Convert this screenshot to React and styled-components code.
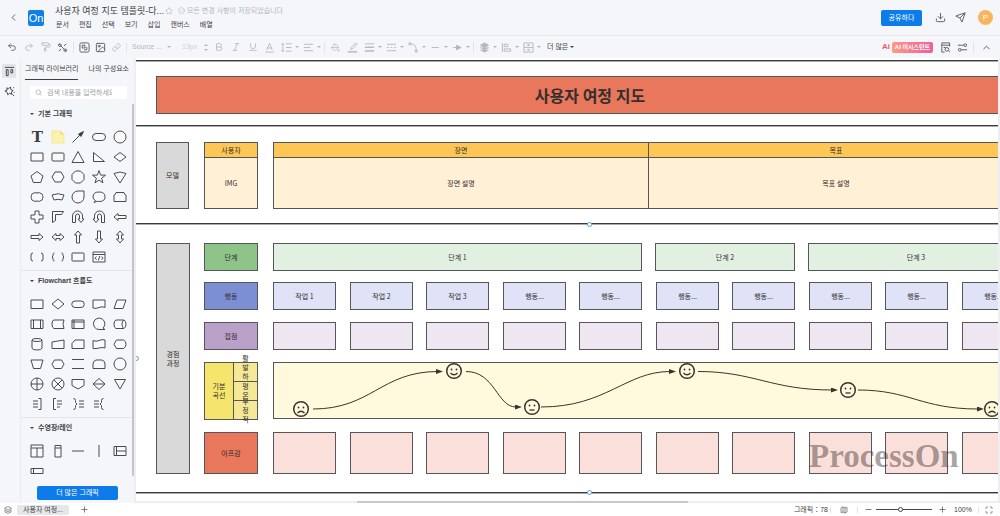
import { useState } from 'react'
import styled, { createGlobalStyle, css } from 'styled-components'
import {
  ChevronLeft, ChevronUp, Star, CircleCheck, Download, Send, Undo2, Redo2, PaintRoller,
  Image, Link, Bold, Italic, Underline, PaintBucket, Search, Layers, Map, Maximize, Minus, Plus,
} from 'lucide-react'

const GlobalStyle = createGlobalStyle`
  * {
    box-sizing: border-box;
  }
  body {
    margin: 0;
    font-family: "Liberation Sans", "Noto Sans CJK KR", sans-serif;
    font-size: 7px;
    line-height: 10px;
    color: #3c3f44;
  }
  button, input, select {
    font: inherit;
    color: inherit;
    border: none;
    background: none;
    padding: 0;
    margin: 0;
    outline: none;
  }
  button {
    cursor: pointer;
  }
  svg {
    display: block;
    flex: none;
  }
`

const Page = styled.div`
  display: flex;
  flex-direction: column;
  height: 100vh;
  overflow: hidden;
  background: #f5f6f9;
`

/* ---------- header ---------- */

const Header = styled.header`
  display: flex;
  align-items: center;
  flex: none;
  height: 35px;
  padding: 0 7px 0 8px;
`

const IconButton = styled.button`
  display: flex;
  align-items: center;
  justify-content: center;
  width: ${(p) => p.$w || 20}px;
  height: 16px;
  color: ${(p) => (p.$muted ? '#b4b7bc' : '#55585d')};
`

const Logo = styled.a`
  width: 16px;
  height: 16px;
  margin: 0 11px 0 10px;
  border-radius: 2px;
  background: #117fe6;
  color: white;
  font-size: 11px;
  line-height: 16px;
  text-align: center;
  text-decoration: none;
`

const TitleRow = styled.div`
  display: flex;
  align-items: center;
  height: 14px;
`

const FileName = styled.h1`
  margin: 0 2px 0 0;
  font-size: 9px;
  line-height: 14px;
  font-weight: 400;
  width: 108px;
  white-space: nowrap;
`

const Saved = styled.span`
  display: flex;
  align-items: center;
  gap: 2px;
  margin-left: 5px;
  color: #b4b7bc;
`

const Menu = styled.nav`
  display: flex;
  align-items: center;
  gap: 10px;
  height: 14px;
  padding-left: 1px;
`

const HeaderRight = styled.div`
  display: flex;
  align-items: center;
  margin-left: auto;
`

const ShareButton = styled.button`
  width: 41px;
  height: 16px;
  margin-right: 8px;
  border-radius: 2px;
  background: #0d7bea;
  color: white;
`

const Avatar = styled.button`
  width: 15px;
  height: 15px;
  margin-left: 8px;
  border-radius: 50%;
  background: #f7b55c;
  color: white;
  font-size: 8px;
`

/* ---------- toolbar ---------- */

const Toolbar = styled.div`
  display: flex;
  align-items: center;
  flex: none;
  height: 23px;
  padding: 0 4px 0 3px;
  border-top: 1px solid #e6e8eb;
`

const Divider = styled.span`
  width: 1px;
  height: ${(p) => p.$h || 11}px;
  margin: 0 2px;
  background: #e1e3e7;
`

const DropButton = styled(IconButton)`
  width: 22px;
  justify-content: flex-start;
  gap: 3px;
  padding-left: 3px;
`

const Caret = styled.i`
  width: 0;
  height: 0;
  border: 2px solid transparent;
  border-top-color: currentColor;
  border-bottom: none;
`

const FontBox = styled.label`
  display: flex;
  align-items: center;
  width: 48px;
  padding-left: 3px;
  color: #b4b7bc;
`

const FontSelect = styled.select`
  appearance: none;
  width: 35px;
`

const SizeInput = styled.input`
  width: 20px;
  margin-left: 5px;
  color: #cfd1d5;
`

const Stepper = styled.button`
  display: flex;
  flex-direction: column;
  align-items: center;
  gap: 3px;
  width: 8px;
  color: #b4b7bc;
`

const CaretUp = styled(Caret)`
  transform: rotate(180deg);
`

const MoreButton = styled.button`
  display: flex;
  align-items: center;
  gap: 2px;
  margin-left: 5px;
`

const ToolbarRight = styled.div`
  display: flex;
  align-items: center;
  margin-left: auto;
`

const AiButton = styled.button`
  display: flex;
  align-items: center;
  gap: 2px;
  margin-right: 4px;
  color: #ee5768;
  font-size: 8px;
  font-weight: 700;
`

const AiBadge = styled.span`
  width: 41px;
  border-radius: 2px;
  background: linear-gradient(90deg, #fb9a86, #ee5f9d);
  color: white;
  font-size: 6px;
  line-height: 11px;
  text-align: center;
  white-space: nowrap;
`

/* ---------- side panel ---------- */

const Main = styled.main`
  display: flex;
  flex: 1;
  min-height: 0;
`

const Rail = styled.nav`
  display: flex;
  flex-direction: column;
  gap: 6px;
  flex: none;
  width: 21px;
  padding: 6px 0 0 2px;
  border-right: 1px solid #eaecef;
`

const RailButton = styled.button`
  display: flex;
  align-items: center;
  justify-content: center;
  width: 14px;
  height: 14px;
  border-radius: 1px;
  background: ${(p) => (p.$active ? '#e2e4e7' : 'none')};
`

const Panel = styled.aside`
  display: flex;
  flex-direction: column;
  flex: none;
  width: 115px;
  border-right: 2px solid #eceef1;
`

const Tabs = styled.div`
  display: flex;
  flex: none;
  gap: 10px;
  padding-left: 4px;
  overflow: hidden;
`

const Tab = styled.button`
  height: 22px;
  border-bottom: 1px solid ${(p) => (p.$active ? '#3c3f44' : 'transparent')};
  white-space: nowrap;
`

const SearchBox = styled.label`
  display: flex;
  align-items: center;
  flex: none;
  gap: 5px;
  height: 13px;
  margin: 6px 7px 5px 9px;
  padding: 0 5px;
  border-radius: 2px;
  background: white;
  color: #9a9da3;
`

const SearchInput = styled.input`
  flex: 1;
  min-width: 0;
  margin-right: 10px;
  &::placeholder {
    color: #9a9da3;
  }
`

const Library = styled.div`
  display: flex;
  flex: 1;
  min-height: 0;
`

const Sections = styled.div`
  flex: 1;
  min-width: 0;
`

const ScrollThumb = styled.div`
  width: 2px;
  height: 372px;
  border-radius: 1px;
  background: #c3c5c9;
`

const Section = styled.section`
  padding: 0 4px 3px 6px;
  border-bottom: ${(p) => (p.$last ? 'none' : '1px solid #e3e5e8')};
`

const SectionTitle = styled.h2`
  display: flex;
  align-items: center;
  gap: 4px;
  height: 20px;
  margin: 0 0 3px;
  padding-left: 3px;
  font-size: 7px;
  line-height: 20px;
  font-weight: 700;
`

const ShapeGrid = styled.div`
  display: grid;
  grid-template-columns: repeat(5, 1fr);
  grid-auto-rows: 20px;
  margin-right: -2px;
`

const ShapeButton = styled.button`
  display: flex;
  align-items: center;
  justify-content: center;
  min-width: 0;
`

const TextShape = styled.span`
  font-family: "DejaVu Serif", serif;
  font-size: 15px;
  font-weight: 700;
  line-height: 20px;
`

const MoreShapes = styled.button`
  display: block;
  width: 81px;
  height: 14px;
  margin: 2px auto 0 16px;
  border-radius: 2px;
  background: #0d7bea;
  color: white;
`

/* ---------- canvas ---------- */

const CanvasArea = styled.div`
  display: flex;
  flex-direction: column;
  flex: 1;
  min-width: 0;
  padding-right: 2px;
  background: #eceef1;
`

const Canvas = styled.div`
  position: relative;
  flex: 1;
  overflow: hidden;
  background: white;
  font-family: "Noto Sans CJK KR", sans-serif;
  color: #332f2e;
`

const HScroll = styled.div`
  flex: none;
  height: 2px;
  padding-left: 221px;
`

const HThumb = styled.div`
  width: 331px;
  height: 2px;
  background: #c6c8cb;
`

const Node = styled.div`
  position: absolute;
  left: ${(p) => p.$x}px;
  top: ${(p) => p.$y}px;
  width: ${(p) => p.$w}px;
  height: ${(p) => p.$h}px;
  display: flex;
  align-items: ${(p) => p.$align || 'center'};
  justify-content: center;
  border: 1px solid #55565a;
  background: ${(p) => p.$fill};
  font-size: 7px;
  line-height: 9px;
  text-align: center;
  white-space: pre-line;
  ${(p) => p.$title && css`
    font-size: 16px;
    line-height: 22px;
    font-weight: 700;
  `}
  ${(p) => p.$narrow && css`
    padding: 0 7px;
    word-break: break-all;
  `}
`

const LaneLine = styled.div`
  position: absolute;
  left: 0;
  right: 0;
  top: ${(p) => p.$y}px;
  height: 1px;
  background: #3b3b3d;
  box-shadow: 0 1px 0 #aaabad;
`

const Handle = styled.div`
  position: absolute;
  left: ${(p) => p.$x}px;
  top: ${(p) => p.$y}px;
  width: 5px;
  height: 5px;
  border: 1px solid #5c9fd6;
  border-radius: 50%;
  background: white;
`

const Overlay = styled.svg`
  position: absolute;
  left: 0;
  top: 0;
`

const Watermark = styled.div`
  position: absolute;
  left: 673px;
  top: 379px;
  font-family: "Liberation Serif", serif;
  font-size: 33px;
  line-height: 38px;
  font-weight: 700;
  color: rgba(60, 50, 50, 0.45);
`

/* ---------- status bar ---------- */

const StatusBar = styled.footer`
  display: flex;
  align-items: center;
  flex: none;
  height: 13px;
  padding: 0 3px 0 2px;
  background: white;
`

const PageTab = styled.button`
  width: 52px;
  height: 10px;
  margin: 0 7px 0 4px;
  border-radius: 2px;
  background: #e6e7e9;
`

const StatusRight = styled.div`
  display: flex;
  align-items: center;
  margin-left: auto;
`

const Slider = styled.input`
  appearance: none;
  width: 56px;
  height: 7px;
  &::-webkit-slider-runnable-track {
    height: 1px;
    background: #44474c;
  }
  &::-webkit-slider-thumb {
    appearance: none;
    width: 5px;
    height: 5px;
    margin-top: -2px;
    border: 1px solid #44474c;
    border-radius: 50%;
    background: white;
  }
`

const ZoomValue = styled.span`
  width: 22px;
  margin-left: 2px;
`

/* ---------- shape library ---------- */

const basicShapes = [
  ['text'],
  ['note'],
  ['arrow line', 'M2.5 13.5 10 6', 'M13.5 2.5 8.500 5 11 7.500Z'],
  ['round rect', 'M5 4.5h6a3.5 3.5 0 0 1 0 7H5a3.5 3.5 0 0 1 0-7Z'],
  ['circle', 'M8 2a6 6 0 1 1 0 12a6 6 0 1 1 0-12Z'],
  ['rect', 'M2 4h12v8H2Z'],
  ['rounded', 'M3 4h10q1 0 1 1v6q0 1-1 1H3q-1 0-1-1V5q0-1 1-1Z'],
  ['triangle', 'M8 2.5 14 13.5H2Z'],
  ['right triangle', 'M2.5 3.5 13.5 12.5h-11Z'],
  ['diamond', 'M8 3.5 14 8 8 12.5 2 8Z'],
  ['pentagon', 'M8 2.5 14 7l-2.3 6.5H4.3L2 7Z'],
  ['hexagon', 'M5 3h6l3 5-3 5H5L2 8Z'],
  ['octagon', 'M5.5 2h5L14 5.5v5L10.5 14h-5L2 10.5v-5Z'],
  ['star', 'M8 1.500l1.600 4.600 4.900.1-3.900 3 1.400 4.700L8 11.100l-4 2.800 1.400-4.700-3.900-3 4.900-.1Z'],
  ['cone', 'M2 4.5q6-3 12 0L8 14Z'],
  ['cloud', 'M4 4.500q1.500-1.500 4-.5 2.500-1 4 .5 2 .5 1.500 2 1 1.500 0 3 .5 1.500-1.500 2-1.500 1.500-4 .5-2.500 1-4-.5-2-.5-1.500-2-1-1.500 0-3-.5-1.500 1.500-2Z'],
  ['bowl', 'M2 6q6-2.500 12 0l-2 5q-4-1.500-8 0Z'],
  ['drop', 'M14 2v6a6 6 0 1 1-6-6Z'],
  ['bubble', 'M4.500 11.500Q2 10.500 2 8q0-5 6-5t6 4.800-6 4.700q-1 0-1.500-.3L3 13.500Z'],
  ['tab shape', 'M2 12.500V6q1.500 0 2-2.500h8q.5 2.500 2 2.500v6.500Z'],
  ['cross', 'M6 2h4v4h4v4h-4v4H6v-4H2V6h4Z'],
  ['corner', 'M2.500 2.500h11l-2 3h-6v6l-3 2Z'],
  ['u-turn right', 'M2.500 13.500V7a5 5 0 0 1 10 0v3h1.500l-3 3.500-3-3.500h1.500V7a2 2 0 0 0-4 0v6.500Z'],
  ['u-turn left', 'M13.500 13.500V7a5 5 0 0 0-10 0v3H2l3 3.500L8 10H6.500V7a2 2 0 0 1 4 0v6.500Z'],
  ['arrow left', 'M2 8 6 4.500v2h8v3H6v2Z'],
  ['arrow right', 'M14 8l-4-3.500v2H2v3h8v2Z'],
  ['arrow both', 'M2 8l4-3.500v2h4v-2L14 8l-4 3.500v-2H6v2Z'],
  ['arrow up', 'M8 2 4.500 6h2v8h3V6h2Z'],
  ['arrow down', 'M8 14l-3.500-4h2V2h3v8h2Z'],
  ['arrow vertical', 'M8 2 4.500 6h2v4h-2L8 14l3.500-4h-2V6h2Z'],
  ['parentheses', 'M4 4q-2 0-2 2v4q0 2 2 2M12 4q2 0 2 2v4q0 2-2 2'],
  ['braces', 'M4.500 4Q3 4 3 5.500v1.500L2 8l1 1v1.500Q3 12 4.500 12M11.500 4Q13 4 13 5.500v1.500l1 1-1 1v1.500q0 1.500-1.500 1.500'],
  ['box', 'M2.500 4h11q.5 0 .5.500v7q0 .5-.5.500h-11q-.5 0-.5-.5v-7q0-.5.500-.5Z'],
  ['code', 'M2 3h12v10H2ZM2 5.500h12M5.500 7.500 4 9.200l1.500 1.600M10.500 7.500 12 9.200l-1.500 1.600M8.800 7 7.300 11.500'],
]

const flowShapes = [
  ['process', 'M2 4h12v8.500H2Z'],
  ['decision', 'M8 3l6 5-6 5-6-5Z'],
  ['terminator', 'M5 5h6a3 3 0 0 1 0 6.500H5A3 3 0 0 1 5 5Z'],
  ['document', 'M2 4h12v7.500q-3-1.500-6 0-3 1.500-6 .5Z'],
  ['data', 'M5 4h9l-3 8.500H2Z'],
  ['predefined', 'M2 4h12v8.500H2ZM4.500 4v8.500M11.500 4v8.500'],
  ['stored data', 'M4 4h10q-2 4 0 8.500H4Q2 12 2 8t2-4Z'],
  ['internal storage', 'M2 4h12v8.500H2ZM4 4v8.500M2 6h12'],
  ['sequential data', 'M14 13.500H8A5.700 5.700 0 1 1 12 12l2 1.500'],
  ['direct data', 'M4 4h8q2 1 2 4.200T12 12.500H4Q2 12 2 8.200T4 4ZM11.500 4q-1.500 2-1.500 4.200t1.500 4.300'],
  ['database', 'M3 4v8q0 2 5 2t5-2V4q0-1.500-5-1.500T3 4q0 1.500 5 1.500T13 4'],
  ['manual input', 'M2 6l12-2v8.500H2Z'],
  ['card', 'M5 4h9v8.500H2V7.500Z'],
  ['tape', 'M2 4.500q3 1.500 6 0t6-.5V12q-3-1-6 0t-6 .5Z'],
  ['display', 'M4.500 4h7Q14 5 14 8.200t-2.500 4.300h-7L2 8.200Z'],
  ['manual operation', 'M2 4h12l-2.500 8.500h-7Z'],
  ['preparation', 'M4.500 4h7L14 8.200l-2.500 4.300h-7L2 8.200Z'],
  ['parallel mode', 'M2 3.500h12M2 12.500h12'],
  ['loop limit', 'M5 4h6q3 1 3 4v4.500H2V8q0-3 3-4Z'],
  ['connector', 'M8 2a6 6 0 1 1 0 12a6 6 0 1 1 0-12Z'],
  ['or', 'M8 2a6 6 0 1 1 0 12a6 6 0 1 1 0-12ZM2 8h12M8 2v12'],
  ['junction', 'M8 2a6 6 0 1 1 0 12a6 6 0 1 1 0-12ZM4 4l8 8M12 4l-8 8'],
  ['off page', 'M2 3.500h12v6L8 13 2 9.500Z'],
  ['sort', 'M8 2.500 14 8l-6 5.500L2 8ZM2 8h12'],
  ['merge', 'M2.500 3.500h11L8 13Z'],
  ['note right', 'M4 5h5M4 8h5M4 11h5M9.500 2.500H12v11H9.500'],
  ['note left', 'M7 5h5M7 8h5M7 11h3M6 2.500H3.500v11H6'],
  ['brace left', 'M9 5h5M9 8h5M9 11h5M3.500 2.500q2 0 2 2v2l1.500 1.500-1.500 1.500v2q0 2-2 2'],
  ['brace right', 'M3 5h5M3 8h5M3 11h5M12.500 2.500q-2 0-2 2v2L9 8l1.500 1.500v2q0 2 2 2'],
]

const laneShapes = [
  ['pool', 'M2 2h12v12H2ZM2 5h12M8 5v9'],
  ['lane', 'M5 2.500h6v11.500H5ZM5 5h6'],
  ['separator', 'M2 8h12'],
  ['vertical separator', 'M8 2v12'],
  ['horizontal pool', 'M2 3.500h12v9H2ZM4.500 3.500v9M4.500 8H14'],
  ['horizontal lane', 'M2 5.500h12v5H2ZM4.500 5.500v5'],
]

const Shape = ({ name, d, head }) => {
  if (name === 'text') return <TextShape>T</TextShape>
  if (name === 'note') {
    return (
      <svg width="16" height="16" viewBox="0 0 16 16">
        <path d="M2 2h8.500L14 5.500V14H2Z" fill="#fdf2ab" stroke="#f0dd80" strokeWidth="0.6" />
        <path d="M10.500 2v3.500H14Z" fill="#ead87c" />
      </svg>
    )
  }
  return (
    <svg width="16" height="16" viewBox="0 0 16 16" fill="none" stroke="#484b50" strokeWidth="1">
      <path d={d} fill={head ? 'none' : 'rgba(255,255,255,.4)'} />
      {head && <path d={head} fill="#303236" />}
    </svg>
  )
}

const ShapeSection = ({ title, shapes, last }) => (
  <Section $last={last}>
    <SectionTitle><Caret />{title}</SectionTitle>
    <ShapeGrid>
      {shapes.map(([name, d, head]) => (
        <ShapeButton key={name} aria-label={name}>
          <Shape name={name} d={d} head={head} />
        </ShapeButton>
      ))}
    </ShapeGrid>
  </Section>
)

/* ---------- diagram data ---------- */

const columns = [137, 214, 290, 367, 443, 520, 596, 673, 749, 826]
const actions = ['작업 1', '작업 2', '작업 3']

const nodes = [
  { x: 20, y: 18, w: 868, h: 38, fill: '#e8775b', text: '사용자 여정 지도', title: true },
  { x: 20, y: 84, w: 33, h: 67, fill: '#d9d9d9', text: '모델' },
  { x: 68, y: 84, w: 54, h: 16, fill: '#fec655', text: '사용자' },
  { x: 68, y: 99, w: 54, h: 52, fill: '#fff0d6', text: 'IMG' },
  { x: 137, y: 84, w: 376, h: 16, fill: '#fec655', text: '장면' },
  { x: 137, y: 99, w: 376, h: 52, fill: '#fff0d6', text: '장면 설명' },
  { x: 512, y: 84, w: 376, h: 16, fill: '#fec655', text: '목표' },
  { x: 512, y: 99, w: 376, h: 52, fill: '#fff0d6', text: '목표 설명' },
  { x: 20, y: 185, w: 34, h: 231, fill: '#d9d9d9', text: '경험\n과정' },
  { x: 68, y: 185, w: 54, h: 28, fill: '#8ec389', text: '단계' },
  { x: 137, y: 185, w: 369, h: 28, fill: '#e2f0e1', text: '단계 1' },
  { x: 519, y: 185, w: 140, h: 28, fill: '#e2f0e1', text: '단계 2' },
  { x: 672, y: 185, w: 216, h: 28, fill: '#e2f0e1', text: '단계 3' },
  { x: 68, y: 224, w: 54, h: 28, fill: '#7c8fd4', text: '행동' },
  { x: 68, y: 264, w: 54, h: 28, fill: '#bba0ca', text: '접점' },
  { x: 68, y: 304, w: 30, h: 58, fill: '#f5e56d', text: '기분\n곡선' },
  { x: 97, y: 304, w: 25, h: 20, fill: '#f5e896', text: '활발하', narrow: true, align: 'flex-end' },
  { x: 97, y: 323, w: 25, h: 20, fill: '#f5e896', text: '평온', narrow: true },
  { x: 97, y: 342, w: 25, h: 20, fill: '#f5e896', text: '부정적', narrow: true },
  { x: 137, y: 304, w: 751, h: 57, fill: '#fff9de' },
  { x: 68, y: 374, w: 54, h: 42, fill: '#e8775b', text: '아프감' },
  ...columns.map((x, i) => ({ x, y: 224, w: 63, h: 28, fill: '#e0e2f7', text: actions[i] || '행동...' })),
  ...columns.map((x) => ({ x, y: 264, w: 63, h: 28, fill: '#eee6f1' })),
  ...columns.map((x) => ({ x, y: 374, w: 63, h: 42, fill: '#fbdfda' })),
]

const links = [
  'M177 351C235 351 245 314 301 313.500',
  'M330 313.500C359 313.500 361 349 380 349',
  'M405 349C470 349 490 313.500 534 313.500',
  'M562 313.500C618 313.500 635 332 696 332',
  'M722 332C774 332 785 351 842 351',
]

const faces = [
  { x: 165, y: 351, mouth: 'M-3.500 4Q0 .5 3.500 4' },
  { x: 318, y: 313, mouth: 'M-3.500 2Q0 5.500 3.500 2' },
  { x: 396, y: 349, mouth: 'M-2.500 3H2.500' },
  { x: 551, y: 313, mouth: 'M-3.500 2Q0 5.500 3.500 2' },
  { x: 712, y: 332, mouth: 'M-2.500 3H2.500' },
  { x: 856, y: 351, mouth: 'M-3.500 4Q0 .5 3.500 4' },
]

const Diagram = () => (
  <Canvas>
    {[2, 67, 165, 434].map((y) => <LaneLine key={y} $y={y} />)}
    {nodes.map((n, i) => (
      <Node
        key={i}
        $x={n.x}
        $y={n.y}
        $w={n.w}
        $h={n.h}
        $fill={n.fill}
        $title={n.title}
        $narrow={n.narrow}
        $align={n.align}
      >
        {n.text}
      </Node>
    ))}
    <Overlay width="888" height="443" viewBox="0 0 888 443" fill="none" stroke="#3a332c">
      <defs>
        <marker id="head" markerWidth="7" markerHeight="6" refX="1" refY="2.500" orient="auto" markerUnits="userSpaceOnUse">
          <path d="M0 0 7 2.500 0 5Z" fill="#3a332c" stroke="none" />
        </marker>
      </defs>
      {links.map((d) => <path key={d} d={d} markerEnd="url(#head)" />)}
      {faces.map((f) => (
        <g key={f.x} transform={`translate(${f.x} ${f.y})`}>
          <circle r="7.300" strokeWidth="1.500" />
          <circle cx="-2.500" cy="-1.500" r="0.900" fill="#3a332c" stroke="none" />
          <circle cx="2.500" cy="-1.500" r="0.900" fill="#3a332c" stroke="none" />
          <path d={f.mouth} strokeWidth="1.300" />
        </g>
      ))}
    </Overlay>
    <Watermark>ProcessOn</Watermark>
    <Handle $x={451} $y={164} />
    <Handle $x={451} $y={432} />
    <Handle $x={-2} $y={298} />
  </Canvas>
)

/* small line drawings for the toolbar, on a 12px grid */
const Glyph = ({ d, fill = 'none' }) => (
  <svg width="11" height="11" viewBox="0 0 12 12" fill={fill} stroke="currentColor" strokeWidth="1">
    <path d={d} />
  </svg>
)

const Drop = ({ label, children }) => (
  <DropButton $muted aria-label={label}>{children}<Caret /></DropButton>
)

function App() {
  const [zoom, setZoom] = useState(44)
  const [size, setSize] = useState('13px')
  const [keyword, setKeyword] = useState('')

  return (
    <>
      <GlobalStyle />
      <Page>
        <Header>
          <IconButton $w={10} aria-label="뒤로"><ChevronLeft size={11} /></IconButton>
          <Logo href="#">On</Logo>
          <div>
            <TitleRow>
              <FileName>사용자 여정 지도 템플릿-다...</FileName>
              <IconButton $w={8} $muted aria-label="즐겨찾기"><Star size={8} /></IconButton>
              <Saved><CircleCheck size={7} />모든 변경 사항이 저장되었습니다</Saved>
            </TitleRow>
            <Menu>
              {['문서', '편집', '선택', '보기', '삽입', '캔버스', '배열'].map((m) => <button key={m}>{m}</button>)}
            </Menu>
          </div>
          <HeaderRight>
            <ShareButton>공유하다</ShareButton>
            <IconButton aria-label="다운로드"><Download size={11} /></IconButton>
            <IconButton aria-label="보내기"><Send size={11} /></IconButton>
            <Avatar>P</Avatar>
          </HeaderRight>
        </Header>

        <Toolbar>
          <IconButton $w={17} aria-label="실행 취소"><Undo2 size={10} /></IconButton>
          <IconButton $w={17} $muted aria-label="다시 실행"><Redo2 size={10} /></IconButton>
          <IconButton $w={17} $muted aria-label="서식 복사"><PaintRoller size={10} /></IconButton>
          <IconButton $w={17} aria-label="미화">
            <Glyph d="M2 2l8 8M3 5a1.500 1.500 0 1 1 .1 0M9 10.500a1.500 1.500 0 1 1 .1 0M10 2 7.500 4.500M2 10l2.500-2.500" />
          </IconButton>
          <Divider />
          <IconButton $w={16} aria-label="도형">
            <Glyph d="M2.500 1h7Q11 1 11 2.500v7Q11 11 9.500 11h-7Q1 11 1 9.500v-7Q1 1 2.500 1ZM3.500 3.500h3v3h-3ZM8.500 5.500v3h-3" />
          </IconButton>
          <IconButton $w={16} aria-label="이미지"><Image size={11} /></IconButton>
          <IconButton $w={16} $muted aria-label="링크"><Link size={9} /></IconButton>
          <Divider />
          <FontBox>
            <FontSelect aria-label="글꼴">
              <option>Source ...</option>
            </FontSelect>
            <Caret />
          </FontBox>
          <SizeInput aria-label="글꼴 크기" value={size} onChange={(e) => setSize(e.target.value)} />
          <Stepper aria-label="크기 조절"><CaretUp /><Caret /></Stepper>
          <IconButton $w={17} $muted aria-label="굵게"><Bold size={10} /></IconButton>
          <IconButton $w={17} $muted aria-label="기울임"><Italic size={10} /></IconButton>
          <IconButton $w={17} $muted aria-label="밑줄"><Underline size={10} /></IconButton>
          <IconButton $w={17} $muted aria-label="글자 색"><Glyph d="M3 8.500 6 1.500l3 7M4 6.500h4M1.500 11h9" /></IconButton>
          <Drop label="줄 간격"><Glyph d="M5.500 2h6M5.500 6h6M5.500 10h6M2 1.500v9M.5 3 2 1.500 3.500 3M.5 9 2 10.500 3.500 9" /></Drop>
          <Drop label="정렬"><Glyph d="M1 2.500h10M1 6h7M1 9.500h10" /></Drop>
          <Divider />
          <IconButton $w={17} $muted aria-label="채우기"><PaintBucket size={9} /></IconButton>
          <IconButton $w={17} $muted aria-label="선 색"><Glyph d="M4 8l.5-2 5-5 1.500 1.500-5 5ZM1 11h10M1 10.500h10" /></IconButton>
          <Drop label="선 굵기"><Glyph d="M1 2h10M1 5.500h10M1 6h10M1 9.500h10M1 10h10" /></Drop>
          <Drop label="선 스타일"><Glyph d="M1 2.500h10M1 6h2M5 6h2M9 6h2M1 9.500h10" /></Drop>
          <Drop label="연결선"><Glyph d="M1 1h2v2H1ZM3 2q6 0 6 7M8 9h2v2H8Z" /></Drop>
          <Drop label="점프선"><Glyph d="M2 6h8" /></Drop>
          <Drop label="화살표"><Glyph fill="currentColor" d="M1 6h4M5 3.500 10 6 5 8.500Z" /></Drop>
          <Divider />
          <Drop label="레이어"><Glyph fill="currentColor" d="M6 1 10.500 3.500 6 6 1.500 3.500ZM1.500 6 6 8.500 10.500 6M1.500 8.500 6 11l4.500-2.500" /></Drop>
          <Drop label="맞춤"><Glyph d="M1.500 1v10M3.500 2.500h4v2.500h-4ZM3.500 7.500h7V10h-7Z" /></Drop>
          <Drop label="배포"><Glyph d="M1 1h10v10H1ZM1 6h10M4 3.500h4M4 8.500h4M6 2.500v2M6 7.500v2" /></Drop>
          <MoreButton>더 많은<Caret /></MoreButton>
          <ToolbarRight>
            <AiButton>Ai<AiBadge>AI 어시스턴트</AiBadge></AiButton>
            <IconButton $w={17} aria-label="찾기">
              <Glyph d="M5 11H2V1h8.500v4M2 3.500h8.500M4 6h2M7.500 6a2 2 0 1 1 0 4 2 2 0 1 1 0-4M9.500 9.500l1.500 1.500" />
            </IconButton>
            <IconButton $w={17} aria-label="설정">
              <Glyph d="M1 3.500h6.500M7.500 3.500a1.500 1.500 0 1 0 3 0 1.500 1.500 0 1 0-3 0M11 8.500H4.500M4.500 8.500a1.500 1.500 0 1 0-3 0 1.500 1.500 0 1 0 3 0" />
            </IconButton>
            <Divider />
            <IconButton aria-label="접기"><ChevronUp size={11} /></IconButton>
          </ToolbarRight>
        </Toolbar>

        <Main>
          <Rail>
            <RailButton $active aria-label="라이브러리">
              <Glyph d="M1 1.500h10M2.500 4h2v6.500h-2ZM7.500 4h2v3.500h-2Z" />
            </RailButton>
            <RailButton aria-label="AI 도구">
              <Glyph d="M3 2l2 1 2-2 .5 3 2.500 1-2 1.500.5 2.500-2.500-1L4 9.500 3.500 7 1 5.500 3.500 4.500ZM9 9l2 2M10 2l1-.5M10.500 7h1" />
            </RailButton>
          </Rail>
          <Panel>
            <Tabs>
              <Tab $active>그래픽 라이브러리</Tab>
              <Tab>나의 구성요소</Tab>
            </Tabs>
            <SearchBox>
              <Search size={7} />
              <SearchInput
                aria-label="검색"
                placeholder="검색 내용을 입력하세요"
                value={keyword}
                onChange={(e) => setKeyword(e.target.value)}
              />
            </SearchBox>
            <Library>
              <Sections>
                <ShapeSection title="기본 그래픽" shapes={basicShapes} />
                <ShapeSection title="Flowchart 흐름도" shapes={flowShapes} />
                <ShapeSection title="수영장/레인" shapes={laneShapes} last />
                <MoreShapes>더 많은 그래픽</MoreShapes>
              </Sections>
              <ScrollThumb />
            </Library>
          </Panel>
          <CanvasArea>
            <Diagram />
            <HScroll><HThumb /></HScroll>
          </CanvasArea>
        </Main>

        <StatusBar>
          <IconButton $w={11} aria-label="페이지 목록"><Layers size={8} /></IconButton>
          <PageTab>사용자 여정...</PageTab>
          <IconButton $w={16} aria-label="페이지 추가"><Plus size={9} /></IconButton>
          <StatusRight>
            <span>그래픽：78</span>
            <Divider $h={6} />
            <IconButton $w={22} aria-label="지도"><Map size={8} /></IconButton>
            <Divider $h={6} />
            <IconButton $w={16} aria-label="축소"><Minus size={9} /></IconButton>
            <Slider type="range" aria-label="확대/축소" value={zoom} onChange={(e) => setZoom(e.target.value)} />
            <IconButton aria-label="확대"><Plus size={9} /></IconButton>
            <ZoomValue>100%</ZoomValue>
            <Divider $h={6} />
            <IconButton $w={16} aria-label="전체 화면"><Maximize size={8} /></IconButton>
          </StatusRight>
        </StatusBar>
      </Page>
    </>
  )
}

export default App
